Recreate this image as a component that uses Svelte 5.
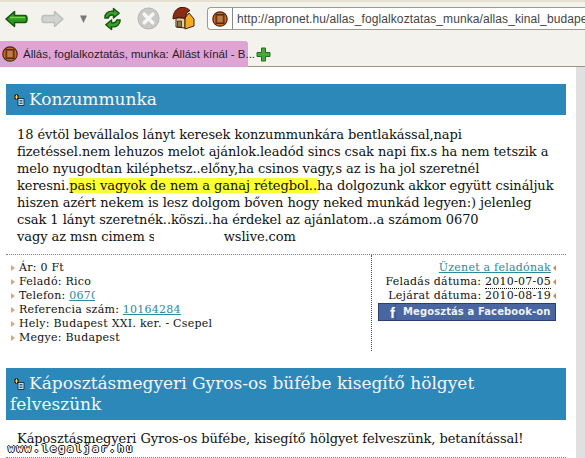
<script>
  const details = [
    { label: "Ár: 0 Ft" },
    { label: "Feladó: Rico" },
    { label: "Telefon: ", link: "0670", clip: true },
    { label: "Referencia szám: ", link: "10164284" },
    { label: "Hely: Budapest XXI. ker. - Csepel" },
    { label: "Megye: Budapest" }
  ];
</script>

{#snippet favicon()}
  <svg class="favicon" width="16" height="16" viewBox="0 0 16 16">
    <circle cx="8" cy="8" r="7.2" fill="#d8641c" stroke="#4a2a14" stroke-width="1.2"/>
    <rect x="4" y="3.6" width="8" height="8.8" fill="#8a4a20" stroke="#3a2010" stroke-width="0.8"/>
    <path d="M5.4 6h5.2M5.4 8h5.2M5.4 10h5.2" stroke="#eeb070" stroke-width="1"/>
  </svg>
{/snippet}

{#snippet headIcon()}
  <svg class="head-icon" width="12" height="12" viewBox="0 0 12 12">
    <path d="M5 4.5h6v7H5z" fill="#cfe6f5" stroke="#123a5c"/>
    <path d="M6.5 6.5h3M6.5 8h3M6.5 9.5h3" stroke="#123a5c" stroke-width="0.8"/>
    <path d="M1 3h5M3.5 .5v5" stroke="#111" stroke-width="3"/>
    <path d="M1.5 3h4M3.5 1v4" stroke="#f4d060" stroke-width="1.2"/>
  </svg>
{/snippet}

<div class="browser">
  <div class="toolbar">
    <svg class="nav" width="23" height="18" viewBox="0 0 23 18">
      <path d="M1 9 9.500 1.500V5.500H20c1.500 0 2 1.500 2 3.500s-.5 3.500-2 3.500H9.500v4z" fill="#2f9a1c" stroke="#14560e" stroke-width="1.500" stroke-linejoin="round"/>
      <path d="M5 7.500h15" stroke="#6fd052" stroke-width="1.500"/>
    </svg>
    <svg class="nav fwd" width="23" height="18" viewBox="0 0 23 18">
      <path d="M22 9 13.500 1.500V5.500H3c-1.500 0-2 1.500-2 3.500s.5 3.500 2 3.500h10.500v4z" fill="#d0d3d0" stroke="#bcbfbc" stroke-width="1.500" stroke-linejoin="round"/>
    </svg>
    <svg class="nav drop" width="7" height="8" viewBox="0 0 7 8">
      <path d="M0 .5h7L3.500 8z" fill="#777"/>
    </svg>
    <svg class="nav reload" width="23" height="24" viewBox="0 0 24 24">
      <path d="M4 11C4 6 8 3 13 4V1l6 5-6 5V8c-3-.5-5 .5-5.500 3z" fill="#3aa02a" stroke="#14560e" stroke-width="1.500" stroke-linejoin="round"/>
      <path d="M20 13c0 5-4 8-9 7v3l-6-5 6-5v3c3 .5 5-.5 5.500-3z" fill="#3aa02a" stroke="#14560e" stroke-width="1.500" stroke-linejoin="round"/>
    </svg>
    <svg class="nav stop" width="23" height="23" viewBox="0 0 24 24">
      <circle cx="12" cy="12" r="11" fill="#c8c8c6" stroke="#b4b4b2"/>
      <path d="M7.500 7.500l9 9M16.500 7.500l-9 9" stroke="#f6f6f4" stroke-width="3.600" stroke-linecap="round"/>
    </svg>
    <svg class="nav home" width="24" height="24" viewBox="0 0 24 24">
      <path d="M4 12h9v10l-9-1z" fill="#e8cf9a" stroke="#3a2410"/>
      <path d="M13 12l4-5 5 6v7l-9 3z" fill="#f2ac24" stroke="#3a2410"/>
      <path d="M1 13C1 6 5 2 9 1.500c4-.5 7 1 9 3l-3 2-2 6-6-1.500z" fill="#8e2c16" stroke="#3a1408" stroke-linejoin="round"/>
      <path d="M5.500 15h4v6h-4z" fill="#8a7a50" stroke="#3a1408" stroke-width="0.700"/>
    </svg>
    <div class="urlbar">
      <span class="url-icon">{@render favicon()}</span>
      <span class="url">http://apronet.hu/allas_foglalkoztatas_munka/allas_kinal_budapest</span>
    </div>
  </div>

  <div class="tabbar">
    <div class="tab">
      {@render favicon()}
      <span class="tab-title">Állás, foglalkoztatás, munka: Állást kínál - B...</span>
    </div>
    <svg class="newtab" width="15" height="15" viewBox="0 0 15 15">
      <path d="M5.500 1h4v4.500H14v4H9.500V14h-4V9.500H1v-4h4.500z" fill="#48a83a" stroke="#1f6e18" stroke-linejoin="round"/>
    </svg>
  </div>

  <div class="viewport">
    <main class="page">
      <h2 class="title">{@render headIcon()}Konzummunka</h2>
      <p class="body">18 évtöl bevállalos lányt keresek konzummunkára bentlakással,napi<br>fizetéssel.nem lehuzos melot ajánlok.leadód sincs csak napi fix.s ha nem tetszik a<br>melo nyugodtan kiléphetsz..előny,ha csinos vagy,s az is ha jol szeretnél<br>keresni.<mark>pasi vagyok de nem a ganaj rétegbol..</mark>ha dolgozunk akkor együtt csináljuk<br>hiszen azért nekem is lesz dolgom bőven hogy neked munkád legyen:) jelenleg<br>csak 1 lányt szeretnék..köszi..ha érdekel az ajánlatom..a számom 0670<br>vagy az msn cimem <span class="cut">s</span><span class="redacted"></span>wslive.com</p>

      <div class="info">
        <ul class="details">
          {#each details as d}
            <li>
              <i class="arrow"></i>{d.label}{#if d.link}<a href="#top" class:clip={d.clip}>{d.link}</a>{/if}
            </li>
          {/each}
        </ul>
        <div class="side">
          <div class="side-row"><a href="#top">Üzenet a feladónak</a><i class="back"></i></div>
          <div class="side-row">Feladás dátuma: <span class="dotted">2010-07-05</span><i class="back"></i></div>
          <div class="side-row">Lejárat dátuma: 2010-08-19<i class="back"></i></div>
          <div class="fb">
            <span class="fb-f">f</span>
            <span class="fb-text">Megosztás a Facebook-on</span>
          </div>
        </div>
      </div>

      <h2 class="title second">{@render headIcon()}Káposztásmegyeri Gyros-os büfébe kisegítő hölgyet felveszünk</h2>
      <p class="body last">Káposztásmegyeri Gyros-os büfébe, kisegítő hölgyet felveszünk, betanítással!</p>
      <div class="rule"></div>
    </main>
    <div class="scrollbar"></div>
    <span class="watermark">www.legaljar.hu</span>
  </div>
</div>

<style>
  :global(body) {
    margin: 0;
    background: #fff;
    overflow: hidden;
  }

  .browser {
    width: 585px;
    height: 458px;
    display: flex;
    flex-direction: column;
    overflow: hidden;
  }

  .toolbar {
    height: 33px;
    box-sizing: border-box;
    border-top: 2px solid #e6e0d0;
    background: #f4f2ed;
    display: flex;
    align-items: center;
    padding: 2px 0 0 5px;
    flex-shrink: 0;
  }

  .nav {
    flex-shrink: 0;
    display: block;
  }

  .fwd { margin-left: 13px; }
  .drop { margin-left: 16px; margin-top: 1px; }
  .reload { margin-left: 14px; }
  .stop { margin-left: 13px; }
  .home { margin-left: 12px; margin-top: -2px; }

  .urlbar {
    flex: 1;
    min-width: 0;
    margin-left: 11px;
    height: 23px;
    box-sizing: border-box;
    background: #fff;
    border: 1px solid #a09a8e;
    border-right: 0;
    border-radius: 4px 0 0 4px;
    display: flex;
    align-items: center;
    overflow: hidden;
  }

  .url-icon {
    width: 25px;
    height: 100%;
    box-sizing: border-box;
    border-right: 1px solid #888;
    display: flex;
    align-items: center;
    justify-content: center;
    flex-shrink: 0;
  }

  .url {
    margin-left: 4px;
    font-family: "Liberation Sans", sans-serif;
    font-size: 12px;
    letter-spacing: 0.1px;
    color: #444;
    white-space: nowrap;
  }

  .tabbar {
    height: 34px;
    box-sizing: border-box;
    background: #f4f2ed;
    border-bottom: 1px solid #9a958a;
    display: flex;
    align-items: flex-end;
    flex-shrink: 0;
  }

  .tab {
    width: 248px;
    height: 26px;
    margin-bottom: -1px;
    background: #e0a4d4;
    display: flex;
    align-items: center;
    padding-left: 2px;
    box-sizing: border-box;
    gap: 5px;
    border-radius: 0 3px 0 0;
  }

  .favicon { flex-shrink: 0; display: block; }

  .tab-title {
    font-family: "Liberation Sans", sans-serif;
    font-size: 11.500px;
    color: #2a1a28;
    white-space: nowrap;
  }

  .newtab {
    margin: 0 0 4px 8px;
    flex-shrink: 0;
  }

  .viewport {
    flex: 1;
    min-height: 0;
    display: flex;
    position: relative;
    overflow: hidden;
  }

  .page {
    flex: 1;
    min-width: 0;
    padding: 17px 10px 0 6px;
    font-family: "DejaVu Serif", serif;
    color: #111;
  }

  .scrollbar {
    width: 9px;
    flex-shrink: 0;
    background: #e0e0e0;
  }

  .title {
    margin: 0;
    background: #2d88ba;
    color: #f2f8fb;
    font-weight: normal;
    font-size: 17px;
    line-height: 21px;
    padding: 5px 5px 5px 4px;
  }

  .head-icon {
    margin: 0 4px 0 3px;
    vertical-align: -1px;
  }

  .body {
    margin: 0;
    padding: 11px 0 0 11px;
    font-size: 13px;
    line-height: 17px;
    letter-spacing: -0.07px;
    white-space: nowrap;
  }

  mark {
    background: #ffff33;
    color: inherit;
  }

  .cut {
    display: inline-block;
    width: 5px;
    overflow: hidden;
    vertical-align: bottom;
  }

  .redacted {
    display: inline-block;
    width: 70px;
  }

  .info {
    margin-top: 9px;
    display: flex;
    height: 96px;
    border-top: 1px dotted #6a8a90;
    font-size: 11px;
    line-height: 14px;
    letter-spacing: 0.25px;
  }

  .details {
    list-style: none;
    margin: 0;
    padding: 6px 0 0 5px;
    width: 366px;
    box-sizing: border-box;
    border-right: 1px dotted #556;
  }

  .details li {
    display: flex;
    align-items: center;
    white-space: pre;
  }

  .arrow {
    width: 0;
    height: 0;
    margin-right: 4px;
    border-left: 4px solid #d8a878;
    border-top: 3px solid transparent;
    border-bottom: 3px solid transparent;
  }

  a {
    color: #2b8a9c;
  }

  a.clip {
    display: inline-block;
    width: 26px;
    overflow: hidden;
  }

  .side {
    flex: 1;
    padding: 6px 10px 0 6px;
  }

  .side-row {
    display: flex;
    justify-content: flex-end;
    align-items: center;
    white-space: pre;
  }

  .dotted {
    border-bottom: 1px dotted #111;
    line-height: 13px;
  }

  .back {
    width: 0;
    height: 0;
    margin: 0 0 0 2px;
    border-right: 3px solid #c88a50;
    border-top: 3px solid transparent;
    border-bottom: 3px solid transparent;
  }

  .fb {
    height: 18px;
    box-sizing: border-box;
    background: #4a66a0;
    border: 1px solid #2a3f70;
    display: flex;
    align-items: center;
    font-family: "DejaVu Sans", sans-serif;
    font-weight: bold;
    color: #eef2f8;
    font-size: 10px;
    letter-spacing: 0.1px;
  }

  .fb-f {
    width: 16px;
    height: 100%;
    text-align: right;
    font-size: 15px;
    line-height: 18px;
    color: #fff;
    border-right: 1px solid #3a5488;
    margin-right: 7px;
    font-family: "Liberation Sans", sans-serif;
  }

  .second {
    margin-top: 17px;
  }

  .body.last {
    padding: 10px 0 0 11px;
  }

  .rule {
    margin-top: 10px;
    border-top: 1px dotted #6a8a90;
  }

  .watermark {
    position: absolute;
    left: 8px;
    top: 376px;
    font-family: "DejaVu Sans Mono", monospace;
    font-size: 10.500px;
    line-height: 10px;
    letter-spacing: 2.100px;
    color: #fff;
    font-weight: bold;
    text-shadow: 1px 0 #111, -1px 0 #111, 0 1px #111, 0 -1px #111;
  }
</style>
